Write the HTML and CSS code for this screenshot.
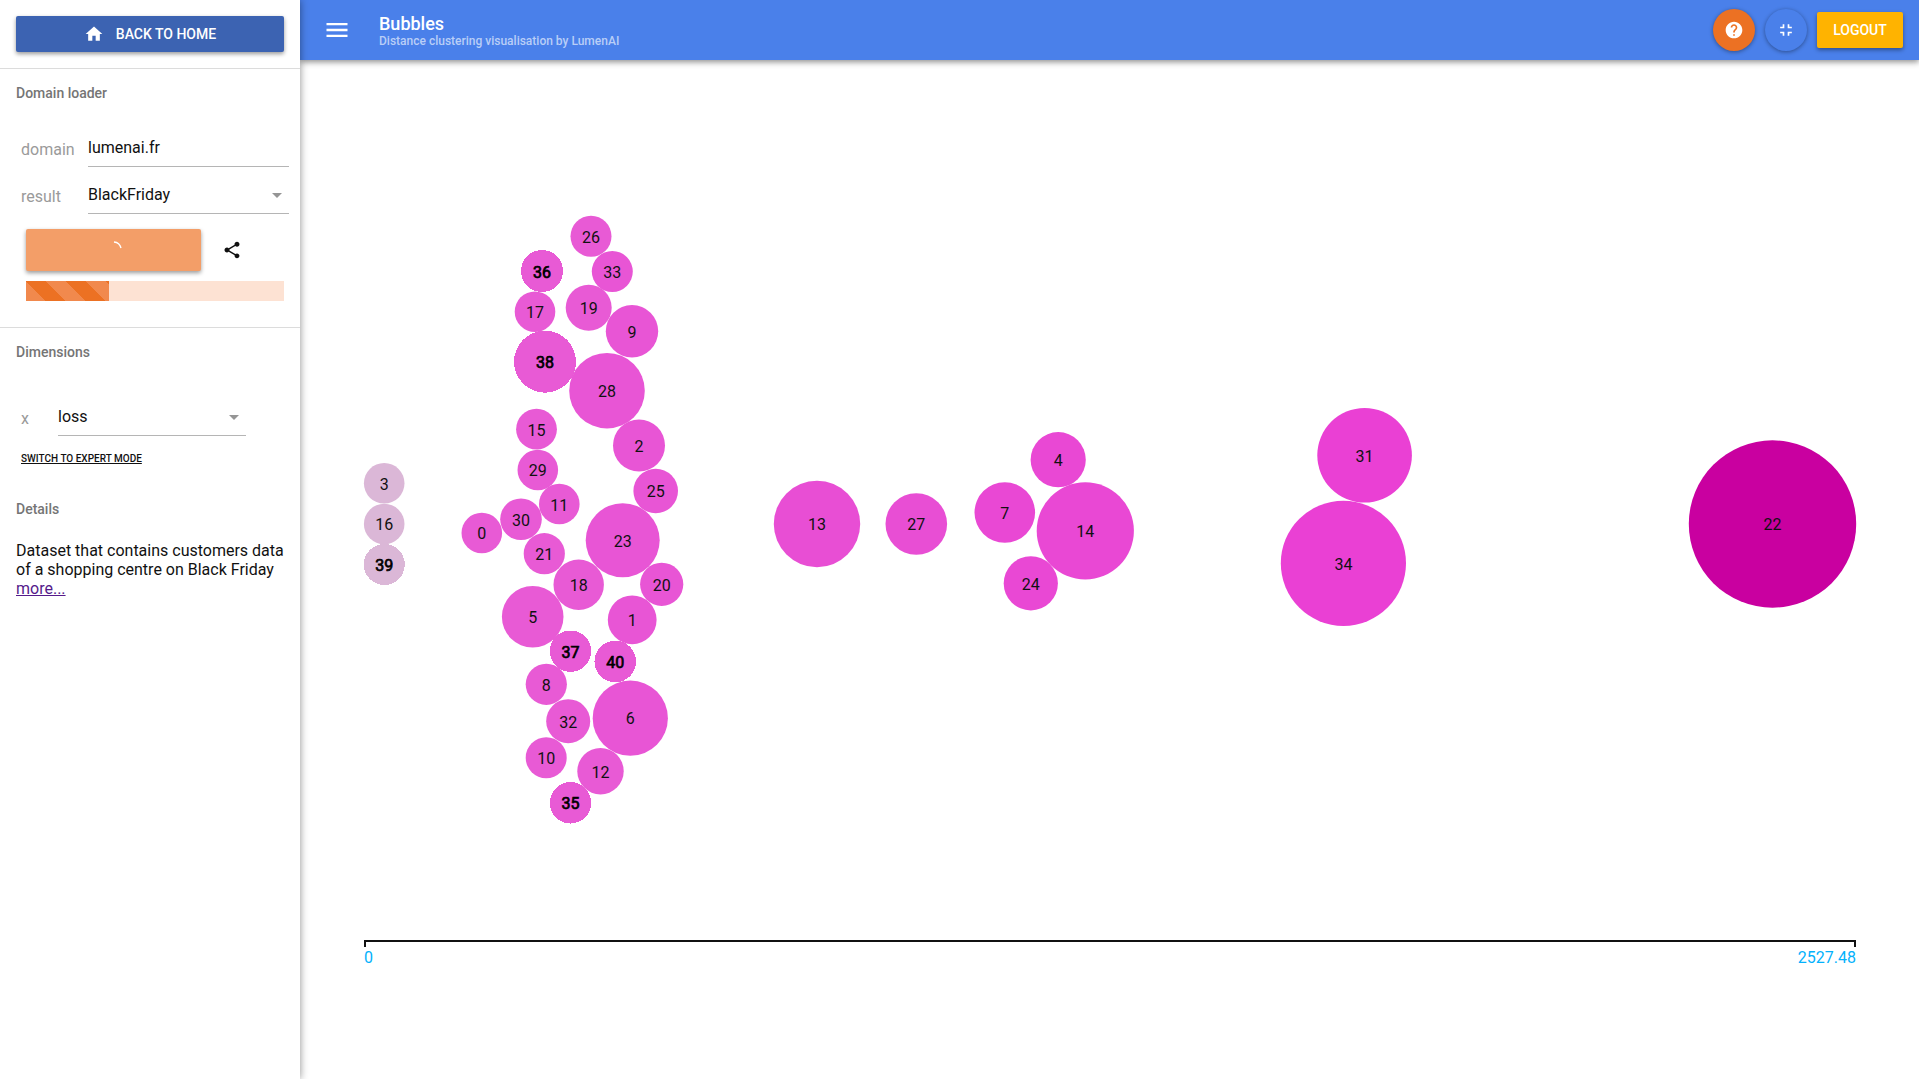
FILE: index.html
```html
<!DOCTYPE html>
<html lang="en">
<head>
<meta charset="utf-8">
<meta name="viewport" content="width=device-width, initial-scale=1">
<title>Bubbles</title>
<link rel="stylesheet" href="styles.css">
</head>
<body>
<div class="app">
  <aside class="sidebar">
    <div class="home">
      <button class="btn btn-home" type="button">
        <svg class="icon" viewBox="0 0 24 24" aria-hidden="true"><path d="M10 20v-6h4v6h5v-8h3L12 3 2 12h3v8z"/></svg>
        BACK TO HOME
      </button>
    </div>

    <section class="panel loader">
      <h2 class="panel-title">Domain loader</h2>
      <div class="field">
        <label class="field-label" for="domain">domain</label>
        <input class="control" id="domain" type="text" value="lumenai.fr">
      </div>
      <div class="field">
        <label class="field-label" for="result">result</label>
        <div class="select">
          <select class="control" id="result"><option>BlackFriday</option></select>
        </div>
      </div>
      <div class="actions">
        <button class="btn btn-load" type="button" aria-label="Loading">
          <svg class="spinner" viewBox="0 0 20 20" aria-hidden="true"><path d="M10 2A8 8 0 0 1 17 8"/></svg>
        </button>
        <button class="btn-share" type="button" aria-label="Share">
          <svg class="icon" viewBox="0 0 24 24" aria-hidden="true"><path d="M18 16.08c-.76 0-1.44.3-1.96.77L8.91 12.7c.05-.23.09-.46.09-.7s-.04-.47-.09-.7l7.05-4.11c.54.5 1.25.81 2.04.81 1.66 0 3-1.34 3-3s-1.34-3-3-3-3 1.34-3 3c0 .24.04.47.09.7L8.04 9.81C7.5 9.31 6.79 9 6 9c-1.66 0-3 1.34-3 3s1.34 3 3 3c.79 0 1.5-.31 2.04-.81l7.12 4.16c-.05.21-.08.43-.08.65 0 1.61 1.31 2.92 2.92 2.92s2.92-1.31 2.92-2.92-1.31-2.92-2.92-2.92z"/></svg>
        </button>
      </div>
      <div class="progress" role="progressbar" aria-valuenow="32" aria-valuemin="0" aria-valuemax="100" aria-label="Loading progress">
        <div class="progress-bar" style="width: 32%"></div>
      </div>
    </section>

    <section class="panel dimensions">
      <h2 class="panel-title">Dimensions</h2>
      <div class="field field-axis">
        <label class="field-label" for="axis-x">x</label>
        <div class="select">
          <select class="control" id="axis-x"><option>loss</option></select>
        </div>
      </div>
      <button class="btn-expert" type="button">SWITCH TO EXPERT MODE</button>
    </section>

    <section class="details">
      <h2 class="panel-title">Details</h2>
      <p class="details-text">Dataset that contains customers data of a shopping centre on Black Friday <a class="more" href="#">more...</a></p>
    </section>
  </aside>

  <div class="content">
    <header class="toolbar">
      <button class="btn-menu" type="button" aria-label="Menu">
        <svg class="icon icon-menu" viewBox="0 0 24 24" aria-hidden="true"><path d="M3 18h18v-2H3v2zm0-5h18v-2H3v2zm0-7v2h18V6H3z"/></svg>
      </button>
      <div class="titles">
        <h1 class="title">Bubbles</h1>
        <p class="subtitle">Distance clustering visualisation by LumenAI</p>
      </div>
      <div class="tools">
        <button class="fab fab-help" type="button" aria-label="Help">
          <svg class="icon" viewBox="0 0 24 24" aria-hidden="true"><path d="M12 2C6.48 2 2 6.48 2 12s4.48 10 10 10 10-4.480 10-10S17.520 2 12 2zm1 17h-2v-2h2v2zm2.070-7.750l-.9.920C13.450 12.900 13 13.500 13 15h-2v-.5c0-1.100.45-2.100 1.170-2.830l1.240-1.260c.37-.36.59-.86.59-1.410 0-1.100-.9-2-2-2s-2 .9-2 2H8c0-2.210 1.790-4 4-4s4 1.790 4 4c0 .88-.36 1.680-.93 2.250z"/></svg>
        </button>
        <button class="fab" type="button" aria-label="Exit fullscreen">
          <svg class="icon" viewBox="0 0 24 24" aria-hidden="true"><path d="M5 16h3v3h2v-5H5v2zm3-8H5v2h5V5H8v3zm6 11h2v-3h3v-2h-5v5zm2-11V5h-2v5h5V8h-3z"/></svg>
        </button>
        <button class="btn btn-logout" type="button">LOGOUT</button>
      </div>
    </header>

    <main class="stage">
      <svg class="chart" viewBox="300 60 1619 1019" role="img" aria-label="Bubbles placed by loss">
        <g class="pale">
          <circle cx="384.2" cy="483.3" r="20.3"/><text x="384.2" y="490">3</text>
          <circle cx="384.2" cy="524" r="20.3"/><text x="384.2" y="530">16</text>
          <g class="marked"><circle cx="384.3" cy="564.5" r="20.5"/><text x="384.3" y="571">39</text></g>
        </g>
        <g class="low">
          <circle cx="481.8" cy="533" r="20.3"/><text x="481.8" y="539">0</text>
          <circle cx="521" cy="519.2" r="20.8"/><text x="521" y="526">30</text>
          <circle cx="559.3" cy="504" r="20.3"/><text x="559.3" y="511">11</text>
          <circle cx="544.3" cy="553.7" r="20.6"/><text x="544.3" y="560">21</text>
          <circle cx="537.8" cy="470" r="20.3"/><text x="537.8" y="476">29</text>
          <circle cx="536.5" cy="429.2" r="20.4"/><text x="536.5" y="436">15</text>
          <circle cx="535" cy="311.7" r="20.3"/><text x="535" y="318">17</text>
          <circle cx="532.7" cy="616.8" r="30.8"/><text x="532.7" y="623">5</text>
          <circle cx="546.3" cy="684.3" r="20.6"/><text x="546.3" y="691">8</text>
          <circle cx="546.2" cy="757.7" r="20.5"/><text x="546.2" y="764">10</text>
          <circle cx="568.2" cy="721.2" r="22"/><text x="568.2" y="728">32</text>
          <circle cx="578.7" cy="584.7" r="25.2"/><text x="578.7" y="591">18</text>
          <circle cx="591" cy="236.3" r="20.5"/><text x="591" y="243">26</text>
          <circle cx="588.7" cy="307.8" r="23"/><text x="588.7" y="314">19</text>
          <circle cx="600.5" cy="771.2" r="23.2"/><text x="600.5" y="778">12</text>
          <g class="marked">
            <circle cx="542" cy="271" r="21"/><text x="542" y="278">36</text>
            <circle cx="545" cy="361.7" r="31"/><text x="545" y="368">38</text>
            <circle cx="570.5" cy="651.2" r="20.7"/><text x="570.5" y="658">37</text>
            <circle cx="570.5" cy="802.8" r="20.7"/><text x="570.5" y="809">35</text>
            <circle cx="615.3" cy="661.5" r="20.8"/><text x="615.3" y="668">40</text>
          </g>
        </g>
        <g class="low-mid">
          <circle cx="612.3" cy="271.5" r="20.5"/><text x="612.3" y="278">33</text>
          <circle cx="607" cy="390.7" r="37.8"/><text x="607" y="397">28</text>
          <circle cx="632" cy="331.3" r="26.2"/><text x="632" y="338">9</text>
          <circle cx="639" cy="445.5" r="26"/><text x="639" y="452">2</text>
          <circle cx="655.7" cy="491" r="22.3"/><text x="655.7" y="497">25</text>
          <circle cx="622.7" cy="540.3" r="37"/><text x="622.7" y="547">23</text>
          <circle cx="661.7" cy="584.3" r="21.6"/><text x="661.7" y="591">20</text>
          <circle cx="632.2" cy="619.8" r="24.4"/><text x="632.2" y="626">1</text>
          <circle cx="630.3" cy="718.2" r="37.6"/><text x="630.3" y="724">6</text>
        </g>
        <g class="mid">
          <circle cx="817" cy="524" r="43.2"/><text x="817" y="530">13</text>
          <circle cx="916.3" cy="524" r="30.8"/><text x="916.3" y="530">27</text>
        </g>
        <g class="mid-high">
          <circle cx="1004.8" cy="512.5" r="30.3"/><text x="1004.8" y="519">7</text>
          <circle cx="1058.2" cy="459.7" r="27.6"/><text x="1058.2" y="466">4</text>
          <circle cx="1085.3" cy="530.8" r="48.6"/><text x="1085.3" y="537">14</text>
          <circle cx="1030.8" cy="583.3" r="27.1"/><text x="1030.8" y="590">24</text>
        </g>
        <g class="high">
          <circle cx="1364.6" cy="455.3" r="47.3"/><text x="1364.6" y="462">31</text>
          <circle cx="1343.4" cy="563.3" r="62.6"/><text x="1343.4" y="570">34</text>
        </g>
        <g class="top">
          <circle cx="1772.5" cy="524" r="83.7"/><text x="1772.5" y="530">22</text>
        </g>
        <path class="axis" d="M365 947V941H1855V947"/>
        <text class="axis-label axis-min" x="364" y="963">0</text>
        <text class="axis-label axis-max" x="1856" y="963">2527.48</text>
      </svg>
    </main>
  </div>
</div>
</body>
</html>
```
FILE: styles.css
```css
* { box-sizing: border-box; }

body {
  margin: 0;
  background: #fff;
  color: #111;
  font: 16px/19px Roboto, "Liberation Sans", sans-serif;
}

h1, h2, p { margin: 0; }

button, input, select { font: inherit; color: inherit; }

button {
  display: inline-flex;
  align-items: center;
  justify-content: center;
  padding: 0;
  border: 0;
  background: none;
  cursor: pointer;
}

.icon { width: 20px; height: 20px; fill: currentColor; }

.app { display: flex; min-height: 100vh; }

/* Sidebar */
.sidebar {
  position: relative;
  z-index: 1;
  flex: 0 0 300px;
  background: #fff;
  box-shadow: 0 0 8px rgba(0, 0, 0, .45);
}

.btn {
  height: 36px;
  border-radius: 2px;
  box-shadow: 0 2px 4px rgba(0, 0, 0, .4);
  color: #fff;
  font-size: 14px;
  font-weight: 500;
}

.home { padding: 16px; }

.btn-home {
  width: 100%;
  gap: 12px;
  background: #3c63b2;
}

.panel { border-top: 1px solid #dcdcdc; }

.panel-title {
  color: #757575;
  font-size: 14px;
  font-weight: 500;
  line-height: 16px;
}

.loader { padding: 16px 16px 26px; }
.loader .panel-title { margin-bottom: 19px; }

.field {
  display: flex;
  align-items: flex-end;
  height: 47px;
  margin: 0 -5px 0 5px;
}

.field-label {
  flex: 0 0 67px;
  padding-bottom: 8px;
  color: #9a9a9a;
}

.control {
  display: block;
  flex: 1;
  width: 100%;
  min-width: 0;
  height: 38px;
  padding: 0;
  border: 0;
  border-bottom: 1px solid #b5b5b5;
  border-radius: 0;
  outline: 0;
  background: none;
  appearance: none;
}

.select { position: relative; flex: 1; }

.select::after {
  content: "";
  position: absolute;
  top: 17px;
  right: 7px;
  border: 5px solid transparent;
  border-top-color: #959595;
  border-bottom: 0;
  pointer-events: none;
}

.actions {
  display: flex;
  align-items: center;
  gap: 21px;
  margin: 15px 0 10px 10px;
}

.btn-load {
  width: 175px;
  height: 42px;
  background: #f39e68;
}

.spinner {
  width: 20px;
  height: 20px;
  fill: none;
  stroke: #fff;
  stroke-width: 1.4;
}

.btn-share { width: 20px; height: 20px; color: #111; }

.progress {
  height: 20px;
  margin-left: 10px;
  background: #fde2d3;
}

.progress-bar {
  height: 100%;
  background: linear-gradient(45deg, #f1894d 25%, #ec7123 25%, #ec7123 50%, #f1894d 50%, #f1894d 75%, #ec7123 75%) 0 20px / 40px 40px;
}

.dimensions { padding: 16px 16px 36px; }
.dimensions .panel-title { margin-bottom: 29px; }

.field-axis { margin-right: 38px; }
.field-axis .field-label { flex-basis: 37px; }

.btn-expert {
  margin: 16px 0 0 5px;
  font-size: 10px;
  font-weight: 500;
  line-height: 13px;
  text-decoration: underline;
}

.dimensions .btn-expert { display: block; }

.details { padding: 0 16px 16px; }
.details-text { margin-top: 24px; }
.more { color: #551a8b; }

/* Toolbar */
.content {
  flex: 1;
  min-width: 0;
  display: flex;
  flex-direction: column;
}

.toolbar {
  display: flex;
  align-items: center;
  height: 60px;
  padding: 0 16px 0 23px;
  background: #4a80ea;
  box-shadow: 0 2px 6px rgba(0, 0, 0, .45);
  color: #fff;
}

.icon-menu { width: 28px; height: 28px; }
.titles { margin-left: 28px; padding-top: 2px; }

.title {
  font-size: 18px;
  font-weight: 500;
  line-height: 20px;
}

.subtitle {
  color: #b9cef7;
  font-size: 12px;
  font-weight: 500;
  line-height: 14px;
}

.tools {
  display: flex;
  align-items: center;
  gap: 10px;
  margin-left: auto;
}

.fab {
  width: 42px;
  height: 42px;
  border-radius: 50%;
  background: #4a80ea;
  box-shadow: 0 1px 4px rgba(0, 0, 0, .4);
}

.fab-help { background: #ec7123; }

.btn-logout { width: 86px; background: #ffb300; }

/* Chart */
.chart { display: block; width: 100%; height: auto; }
.chart text { fill: #111; font-size: 16px; text-anchor: middle; }

.pale { fill: #dbb7d7; }
.low { fill: #e85ad5; }
.low-mid { fill: #e855d5; }
.mid { fill: #e84ed4; }
.mid-high { fill: #e948d4; }
.high { fill: #ea40d4; }
.top { fill: #c900a0; }

.marked { shape-rendering: crispEdges; }
.chart .marked text { fill: #000; stroke: #000; stroke-width: .7; }

.axis { fill: none; stroke: #111; stroke-width: 2; }
.chart .axis-label { fill: #03b1fc; }
.chart .axis-min { text-anchor: start; }
.chart .axis-max { text-anchor: end; }
```
